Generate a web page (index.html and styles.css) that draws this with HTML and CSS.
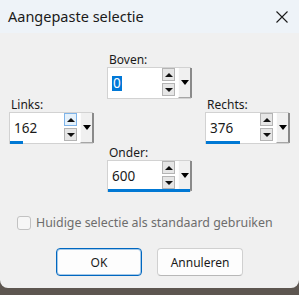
FILE: index.html
```html
<!DOCTYPE html>
<html lang="nl">
<head>
  <meta charset="UTF-8">
  <title>Aangepaste selectie</title>
  <link rel="stylesheet" href="styles.css">
</head>
<body>
  <div class="window">
    <div class="titlebar">
      <span class="title">Aangepaste selectie</span>
      <svg class="close" width="12" height="12" viewBox="0 0 12 12">
        <path d="M0.5 0.5 L11.5 11.5 M11.5 0.5 L0.5 11.5" stroke="#1b1b1b" stroke-width="1.1" fill="none"/>
      </svg>
    </div>

    <div class="content">
      <div class="fields">
        <div class="field boven">
          <label>Boven:</label>
          <div class="spin">
            <span class="val"><span class="sel">0</span></span>
            <div class="arrows">
              <span class="arr up"></span>
              <span class="arr down"></span>
            </div>
            <span class="drop"></span>
          </div>
        </div>

        <div class="field links">
          <label>Links:</label>
          <div class="spin">
            <span class="val">162</span>
            <div class="arrows">
              <span class="arr up hover"></span>
              <span class="arr down"></span>
            </div>
            <span class="drop"></span>
            <span class="bar" style="width: 16%"></span>
          </div>
        </div>

        <div class="field rechts">
          <label>Rechts:</label>
          <div class="spin">
            <span class="val">376</span>
            <div class="arrows">
              <span class="arr up"></span>
              <span class="arr down"></span>
            </div>
            <span class="drop"></span>
            <span class="bar" style="width: 41%"></span>
          </div>
        </div>

        <div class="field onder">
          <label>Onder:</label>
          <div class="spin">
            <span class="val">600</span>
            <div class="arrows">
              <span class="arr up"></span>
              <span class="arr down"></span>
            </div>
            <span class="drop"></span>
            <span class="bar" style="width: 100%"></span>
          </div>
        </div>
      </div>

      <label class="check"><span class="box"></span>Huidige selectie als standaard gebruiken</label>

      <div class="buttons">
        <button class="btn primary">OK</button>
        <button class="btn">Annuleren</button>
      </div>
    </div>
  </div>
</body>
</html>
```

FILE: styles.css
```css
body {
  margin: 0;
  background-color: #5d5650;
  font-family: "Noto Sans", "Open Sans", sans-serif;
  color: #1a1a1a;
}

.window {
  width: 299px;
  height: 288px;
  background-color: #f0f0f0;
  border-radius: 0 0 8px 8px;
  overflow: hidden;
}

.titlebar {
  height: 33px;
  background-color: #eef3f8;
  display: flex;
  align-items: center;
  justify-content: space-between;
  padding: 0 11px 0 8px;
}

.title {
  font-size: 14.5px;
  color: #1a1a1a;
  margin-top: -1px;
}

.content {
  padding-top: 19px;
}

.fields {
  display: grid;
  grid-template-columns: 84px 84px 84px;
  grid-template-rows: 45px 2px 46px 47px;
  column-gap: 14px;
  padding-left: 9px;
}

.field {
  display: flex;
  flex-direction: column;
  align-self: start;
}

.boven  { grid-column: 2; grid-row: 1 / 3; }
.links  { grid-column: 1; grid-row: 2 / 4; }
.rechts { grid-column: 3; grid-row: 2 / 4; }
.onder  { grid-column: 2; grid-row: 4; }

.field label {
  font-size: 12px;
  line-height: 15px;
  padding-left: 2px;
}

.spin {
  position: relative;
  height: 32px;
  box-sizing: border-box;
  border: 1px solid #d2d2d2;
  background-color: white;
  display: flex;
}

.val {
  flex: 1;
  display: flex;
  align-items: center;
  padding-left: 4px;
  font-size: 13.5px;
}

.sel {
  background-color: #0078d7;
  color: white;
  padding: 0 1px;
  line-height: 15px;
}

.arrows {
  display: flex;
  flex-direction: column;
  gap: 2px;
  margin-right: 3px;
}

.arr {
  width: 13px;
  height: 13px;
  box-sizing: border-box;
  border: 1px solid #b4b4b4;
  background-color: #e6e6e6;
  display: flex;
  align-items: center;
  justify-content: center;
}

.arr.hover {
  border-color: #7eb4ea;
  background-color: #e5f1fb;
}

.arr::after {
  content: "";
  border-left: 4px solid transparent;
  border-right: 4px solid transparent;
}

.up::after {
  border-bottom: 4px solid #111;
}

.down::after {
  border-top: 4px solid #111;
}

.drop {
  width: 14px;
  box-sizing: border-box;
  margin-right: -2px;
  background-color: #f0f0f0;
  border-left: 1px solid #fcfcfc;
  border-right: 2px solid #8a8a8a;
  border-bottom: 1px solid #a6a6a6;
  display: flex;
  align-items: center;
  justify-content: center;
}

.drop::after {
  content: "";
  border-left: 4px solid transparent;
  border-right: 4px solid transparent;
  border-top: 5px solid #000;
}

.bar {
  position: absolute;
  left: 0;
  bottom: -1px;
  height: 3px;
  background-color: #0078d4;
}

.check {
  display: flex;
  align-items: center;
  gap: 5px;
  margin: 23px 0 0 17px;
  font-size: 12.4px;
  color: #6d6d6d;
  line-height: 16px;
}

.box {
  width: 14px;
  height: 14px;
  box-sizing: border-box;
  border: 1px solid #c2c2c2;
  border-radius: 3px;
  background-color: #f6f6f6;
}

.buttons {
  display: flex;
  justify-content: center;
  gap: 15px;
  margin-top: 17px;
}

.btn {
  width: 86px;
  height: 28px;
  font-family: inherit;
  font-size: 12px;
  color: #1a1a1a;
  background-color: #fdfdfd;
  border: 1px solid #d0d0d0;
  border-bottom-color: #b8b8b8;
  border-radius: 4px;
}

.primary {
  border: 1px solid #0067c0;
  box-shadow: inset 0 0 0 1px rgba(0, 103, 192, 0.35);
}
```
